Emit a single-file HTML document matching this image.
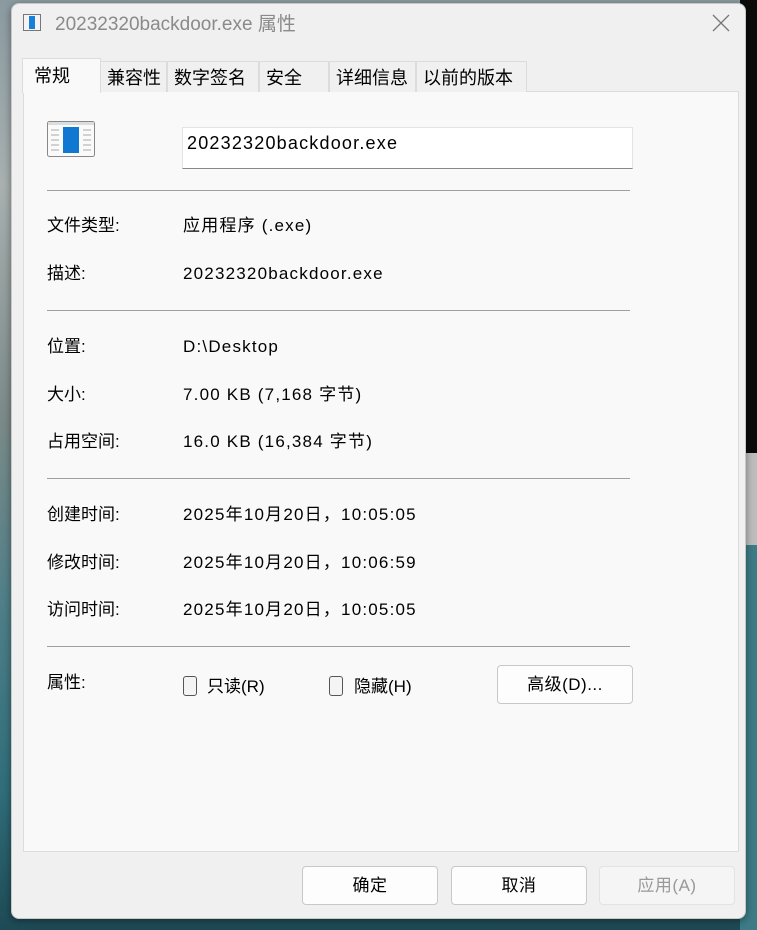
<!DOCTYPE html>
<html><head><meta charset="utf-8"><style>
*{margin:0;padding:0;box-sizing:border-box}
body{width:757px;height:930px;overflow:hidden;position:relative;font-family:"Liberation Sans","Noto Sans CJK SC",sans-serif;color:#000;font-size:17px;
background:linear-gradient(180deg,#8a9aa0 0%,#a8b0b0 20%,#7b8a88 45%,#4f7f88 65%,#2f6e7a 85%,#1e4a55 100%)}
.rs{position:absolute;left:740px;width:17px}
.dlg{position:absolute;left:11px;top:3px;width:735px;height:916px;background:#f0f0f0;border:1px solid #c8c8c8;border-radius:8px;box-shadow:0 2px 8px rgba(0,0,0,.4)}
.abs{position:absolute;white-space:nowrap;line-height:20px}
.v{letter-spacing:1.2px}
.panel{position:absolute;left:23px;top:91px;width:716px;height:761px;background:#f9f9f9;border:1px solid #dcdcdc}
.tab{position:absolute;top:61px;height:31px;background:#f0f0f0;border:1px solid #dcdcdc;border-bottom:none;font-size:18px;padding-left:6px;line-height:32px}
.sep{position:absolute;left:47px;width:583px;height:1px;background:#a0a0a0}
.btn{position:absolute;height:39px;background:#fdfdfd;border:1px solid #c8c8c8;border-radius:4px;text-align:center;line-height:38px;font-size:17px;letter-spacing:.5px}
.cb{position:absolute;width:14px;height:20px;border:1px solid #555;border-radius:3px;background:#f4f4f4}
</style></head><body>
<div class="rs" style="top:0;height:453px;background:#0b0b0b"></div>
<div class="rs" style="top:453px;height:92px;background:#bdbdbd"></div>
<div class="rs" style="top:545px;height:385px;background:#3d7b86"></div>
<div class="dlg"></div>
<svg class="abs" style="left:23px;top:14px" width="18" height="17"><rect x=".5" y=".5" width="17" height="16" fill="#f4f4f4" stroke="#777"/><rect x="6" y="2" width="6" height="13" fill="#1a7fd6"/></svg>
<div class="abs" style="left:55px;top:15px;font-size:19px;color:#8a8a8a">20232320backdoor.exe 属性</div>
<svg class="abs" style="left:712px;top:14px" width="18" height="18"><path d="M1 1L17 17M17 1L1 17" stroke="#777" stroke-width="1.3"/></svg>
<div class="panel"></div>
<div class="tab" style="left:100px;width:67px">兼容性</div>
<div class="tab" style="left:167px;width:92px">数字签名</div>
<div class="tab" style="left:259px;width:70px">安全</div>
<div class="tab" style="left:329px;width:87px">详细信息</div>
<div class="tab" style="left:416px;width:111px">以前的版本</div>
<div class="tab" style="left:22px;top:58px;width:79px;height:35px;background:#f9f9f9;line-height:34px;padding-left:11px">常规</div>
<svg class="abs" style="left:47px;top:121px" width="48" height="36"><rect x=".5" y=".5" width="47" height="35" rx="2" fill="#fafafa" stroke="#888"/><rect x="1" y="1" width="46" height="3" fill="#ddd"/><rect x="16" y="6" width="16" height="26" fill="#1078d0"/><path d="M4 9h8M4 14h8M4 19h8M4 24h8M4 29h8M36 9h8M36 14h8M36 19h8M36 24h8M36 29h8" stroke="#aaa"/></svg>
<div class="abs v" style="left:182px;top:127px;width:451px;height:42px;background:#fff;border:1px solid #e3e3e3;border-bottom:1px solid #888;padding:5px 4px;font-size:18px">20232320backdoor.exe</div>
<div class="sep" style="top:190px"></div>
<div class="abs" style="left:47px;top:216px">文件类型:</div><div class="abs v" style="left:183px;top:216px">应用程序 (.exe)</div>
<div class="abs" style="left:47px;top:264px">描述:</div><div class="abs v" style="left:183px;top:264px">20232320backdoor.exe</div>
<div class="sep" style="top:310px"></div>
<div class="abs" style="left:47px;top:337px">位置:</div><div class="abs v" style="left:183px;top:337px">D:\Desktop</div>
<div class="abs" style="left:47px;top:385px">大小:</div><div class="abs v" style="left:183px;top:385px">7.00 KB (7,168 字节)</div>
<div class="abs" style="left:47px;top:432px">占用空间:</div><div class="abs v" style="left:183px;top:432px">16.0 KB (16,384 字节)</div>
<div class="sep" style="top:478px"></div>
<div class="abs" style="left:47px;top:505px">创建时间:</div><div class="abs v" style="left:183px;top:505px">2025年10月20日，10:05:05</div>
<div class="abs" style="left:47px;top:553px">修改时间:</div><div class="abs v" style="left:183px;top:553px">2025年10月20日，10:06:59</div>
<div class="abs" style="left:47px;top:600px">访问时间:</div><div class="abs v" style="left:183px;top:600px">2025年10月20日，10:05:05</div>
<div class="sep" style="top:646px"></div>
<div class="abs" style="left:47px;top:673px">属性:</div>
<div class="cb" style="left:183px;top:676px"></div><div class="abs" style="left:207px;top:677px">只读(R)</div>
<div class="cb" style="left:329px;top:676px"></div><div class="abs" style="left:354px;top:677px">隐藏(H)</div>
<div class="btn" style="left:497px;top:665px;width:136px">高级(D)...</div>
<div class="btn" style="left:302px;top:866px;width:136px">确定</div>
<div class="btn" style="left:451px;top:866px;width:136px">取消</div>
<div class="btn" style="left:599px;top:866px;width:136px;background:#f5f5f5;border-color:#e3e3e3;color:#999">应用(A)</div>
</body></html>
